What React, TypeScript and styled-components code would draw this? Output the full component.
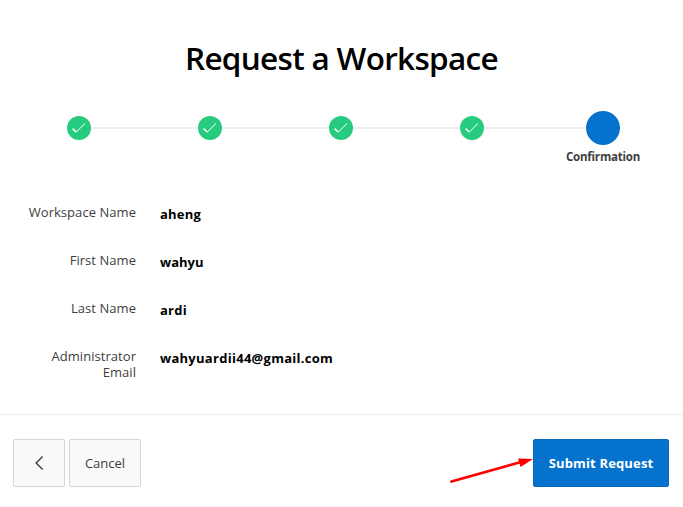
import React from "react";
import styled, { createGlobalStyle } from "styled-components";

const GlobalStyle = createGlobalStyle`
  * { box-sizing: border-box; }
  body { margin: 0; background: #fff; font-family: "Open Sans", "Noto Sans", sans-serif; }
`;

const Page = styled.main`
  width: 683px;
  height: 507px;
  display: flex;
  flex-direction: column;
  overflow: hidden;
  background: #fff;
`;

const Title = styled.h1`
  margin: 38px 0 0;
  height: 40px;
  line-height: 40px;
  font-size: 31.5px;
  font-weight: 600;
  letter-spacing: -0.69px;
  text-align: center;
  white-space: nowrap;
  color: #000;
`;

const Steps = styled.ol`
  display: grid;
  grid-template-columns: repeat(5, 131px);
  margin: 33px 0 0 13.5px;
  padding: 0;
  height: 54px;
  list-style: none;
`;

const Step = styled.li`
  display: flex;
  flex-direction: column;
  align-items: center;
`;

const Track = styled.div`
  display: flex;
  align-items: center;
  width: 100%;
  height: 34px;
`;

const Line = styled.span<{ $hidden?: boolean }>`
  flex: 1;
  height: 2px;
  background: ${(p) => (p.$hidden ? "transparent" : "#efefef")};
`;

const Dot = styled.span<{ $current?: boolean }>`
  display: flex;
  align-items: center;
  justify-content: center;
  width: ${(p) => (p.$current ? 34 : 24)}px;
  height: ${(p) => (p.$current ? 34 : 24)}px;
  border-radius: 50%;
  background: ${(p) => (p.$current ? "#0572ce" : "#26cb7f")};
`;

const StepLabel = styled.span`
  margin-top: 4px;
  font-size: 11.5px;
  line-height: 16px;
  font-weight: 700;
  letter-spacing: -0.2px;
  color: #404040;
`;

const Fields = styled.dl`
  display: flex;
  flex-direction: column;
  margin: 28px 0 0;
  height: 222px;
  border-bottom: 1px solid #ededed;
`;

const Field = styled.div`
  display: grid;
  grid-template-columns: 136px 1fr;
  column-gap: 24px;
  height: 48px;
`;

const FieldLabel = styled.dt`
  padding: 11px 0 0 20px;
  font-size: 13px;
  line-height: 16px;
  text-align: right;
  letter-spacing: 0.05px;
  color: #404040;
`;

const FieldValue = styled.dd<{ $spacing: number }>`
  margin: 0;
  padding-top: 13px;
  font-size: 13px;
  line-height: 16px;
  font-weight: 700;
  letter-spacing: ${(p) => p.$spacing}px;
  color: #000;
`;

const Actions = styled.footer`
  display: flex;
  gap: 4px;
  padding: 24px 14px 0 13px;
`;

const Button = styled.button<{ $width: number; $primary?: boolean }>`
  display: flex;
  align-items: center;
  justify-content: center;
  position: relative;
  width: ${(p) => p.$width}px;
  height: 48px;
  padding: 0;
  margin-left: ${(p) => (p.$primary ? "auto" : "0")};
  border: 1px solid ${(p) => (p.$primary ? "#0569bf" : "#d5d5d5")};
  border-radius: 2px;
  background: ${(p) => (p.$primary ? "#0572ce" : "#f9f9f9")};
  color: ${(p) => (p.$primary ? "#fff" : "#404040")};
  font: ${(p) => (p.$primary ? 700 : 400)} 13px/16px "Open Sans", "Noto Sans", sans-serif;
  letter-spacing: ${(p) => (p.$primary ? "0.15px" : "0")};
  white-space: nowrap;
`;

const Pointer = styled.svg`
  position: absolute;
  left: -85px;
  top: 15px;
`;

const Check = () => (
  <svg width="24" height="24" viewBox="0 0 24 24" fill="none" stroke="#fff">
    <path d="M5.6 12.6 L9.3 16" strokeWidth="1.5" />
    <path d="M9.3 16 L18 7.4" strokeWidth="1" />
  </svg>
);

const fields = [
  { label: "Workspace Name", value: "aheng", spacing: 0.2 },
  { label: "First Name", value: "wahyu", spacing: 0 },
  { label: "Last Name", value: "ardi", spacing: 0.25 },
  { label: "Administrator Email", value: "wahyuardii44@gmail.com", spacing: 0.28 },
];

export default function App() {
  return (
    <Page>
      <GlobalStyle />
      <Title>Request a Workspace</Title>
      <Steps>
        {[0, 1, 2, 3, 4].map((i) => (
          <Step key={i}>
            <Track>
              <Line $hidden={i === 0} />
              <Dot $current={i === 4}>{i < 4 && <Check />}</Dot>
              <Line $hidden={i === 4} />
            </Track>
            {i === 4 && <StepLabel>Confirmation</StepLabel>}
          </Step>
        ))}
      </Steps>
      <Fields>
        {fields.map((f) => (
          <Field key={f.label}>
            <FieldLabel>{f.label}</FieldLabel>
            <FieldValue $spacing={f.spacing}>{f.value}</FieldValue>
          </Field>
        ))}
      </Fields>
      <Actions>
        <Button $width={52} aria-label="Back">
          <svg width="16" height="16" viewBox="0 0 16 16" fill="none" stroke="#404040" strokeWidth="1.4">
            <path d="M11.6 1.5 L5.1 8 L11.6 14.5" />
          </svg>
        </Button>
        <Button $width={72}>Cancel</Button>
        <Button $width={136} $primary>
          Submit Request
          <Pointer width="86" height="32" viewBox="0 0 86 32">
            <path d="M2.5 26.5 L72 7" stroke="#f00" strokeWidth="2.8" strokeLinecap="round" />
            <path d="M69 3.5 L84 4 L71.5 12 Z" fill="#f00" />
          </Pointer>
        </Button>
      </Actions>
    </Page>
  );
}
